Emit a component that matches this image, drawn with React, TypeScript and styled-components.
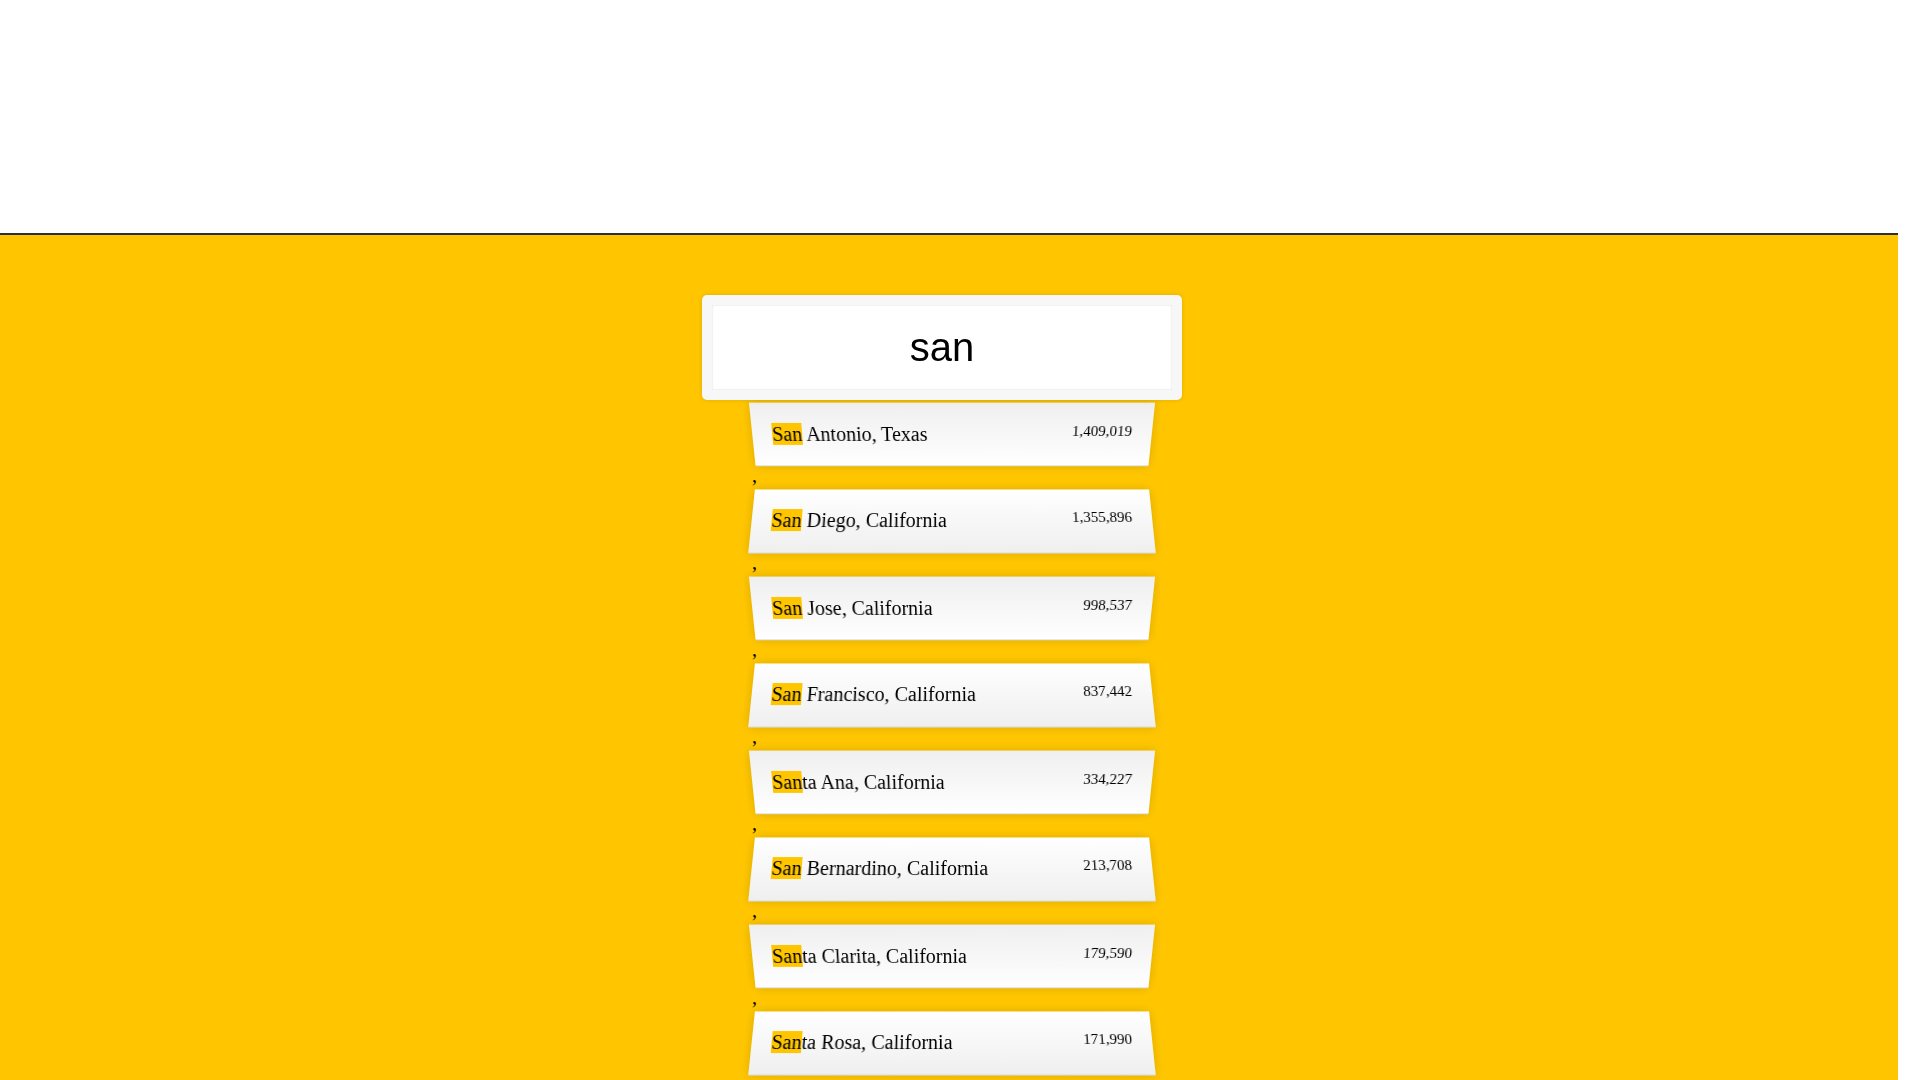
import React from "react";
import styled, { createGlobalStyle } from "styled-components";

const Global = createGlobalStyle`
  html, body {
    margin: 0;
    padding: 0;
    height: 100%;
    overflow: hidden;
    background: #ffffff;
  }
  *, *::before, *::after { box-sizing: border-box; }
`;

const Page = styled.div`
  display: flex;
  flex-direction: column;
  height: 100vh;
  font-family: "Liberation Serif", "Times New Roman", serif;
  font-size: 20px;
  color: #000;
`;

const TopArea = styled.div`
  height: 233px;
  flex: none;
  background: #ffffff;
`;

const Stage = styled.main`
  flex: 1;
  width: calc(100% - 22px);
  background: #ffc600;
  border-top: 2px solid #2f2f2f;
`;

const SearchForm = styled.form`
  width: 400px;
  margin: 60px 0 0 calc(50% - 197px);
  display: flex;
  flex-direction: column;
`;

const SearchInput = styled.input`
  position: relative;
  z-index: 2;
  width: 480px;
  height: 105px;
  margin: 0 0 0 -50px;
  padding: 20px;
  border: 10px solid #f7f7f7;
  border-radius: 5px;
  outline: 0;
  background: #ffffff;
  text-align: center;
  font-family: "Liberation Sans", Arial, sans-serif;
  font-size: 40px;
  color: #000;
  box-shadow: 0 0 5px rgba(0, 0, 0, 0.12), inset 0 0 2px rgba(0, 0, 0, 0.19);
`;

const Suggestions = styled.div`
  margin-top: 0;
  display: flex;
  flex-direction: column;
`;

const Suggestion = styled.div<{ $even: boolean }>`
  display: flex;
  justify-content: space-between;
  padding: 20px;
  border-bottom: 1px solid #d8d8d8;
  box-shadow: 0 0 10px rgba(0, 0, 0, 0.14);
  line-height: 23px;
  background: ${(p) =>
    p.$even
      ? "linear-gradient(to bottom, #ffffff 0%, #efefef 100%)"
      : "linear-gradient(to top, #ffffff 0%, #efefef 100%)"};
  transform: ${(p) =>
    p.$even
      ? "perspective(100px) rotateX(3deg) translateY(2px) scale(1.001)"
      : "perspective(100px) rotateX(-3deg) translateY(3px)"};
`;

const Separator = styled.div`
  height: 23px;
  line-height: 23px;
  font-size: 20px;
`;

const Name = styled.span`
  white-space: nowrap;
`;

const Highlight = styled.span`
  background: #ffc600;
`;

const Population = styled.span`
  font-size: 15px;
  line-height: 17px;
`;

const cities = [
  { name: "San Antonio, Texas", pop: "1,409,019" },
  { name: "San Diego, California", pop: "1,355,896" },
  { name: "San Jose, California", pop: "998,537" },
  { name: "San Francisco, California", pop: "837,442" },
  { name: "Santa Ana, California", pop: "334,227" },
  { name: "San Bernardino, California", pop: "213,708" },
  { name: "Santa Clarita, California", pop: "179,590" },
  { name: "Santa Rosa, California", pop: "171,990" },
  { name: "Thousand Oaks, California", pop: "128,731" },
];

const query = "san";

function renderName(name: string) {
  const idx = name.toLowerCase().indexOf(query);
  if (idx < 0) return name;
  return (
    <>
      {name.slice(0, idx)}
      <Highlight>{name.slice(idx, idx + query.length)}</Highlight>
      {name.slice(idx + query.length)}
    </>
  );
}

export default function App() {
  return (
    <>
      <Global />
      <Page>
        <TopArea />
        <Stage>
          <SearchForm onSubmit={(e) => e.preventDefault()}>
            <SearchInput type="text" defaultValue="san" placeholder="City or State" />
            <Suggestions>
              {cities.map((c, i) => (
                <React.Fragment key={c.name}>
                  {i > 0 && <Separator>,</Separator>}
                  <Suggestion $even={i % 2 === 1}>
                    <Name>{renderName(c.name)}</Name>
                    <Population>{c.pop}</Population>
                  </Suggestion>
                </React.Fragment>
              ))}
            </Suggestions>
          </SearchForm>
        </Stage>
      </Page>
    </>
  );
}
